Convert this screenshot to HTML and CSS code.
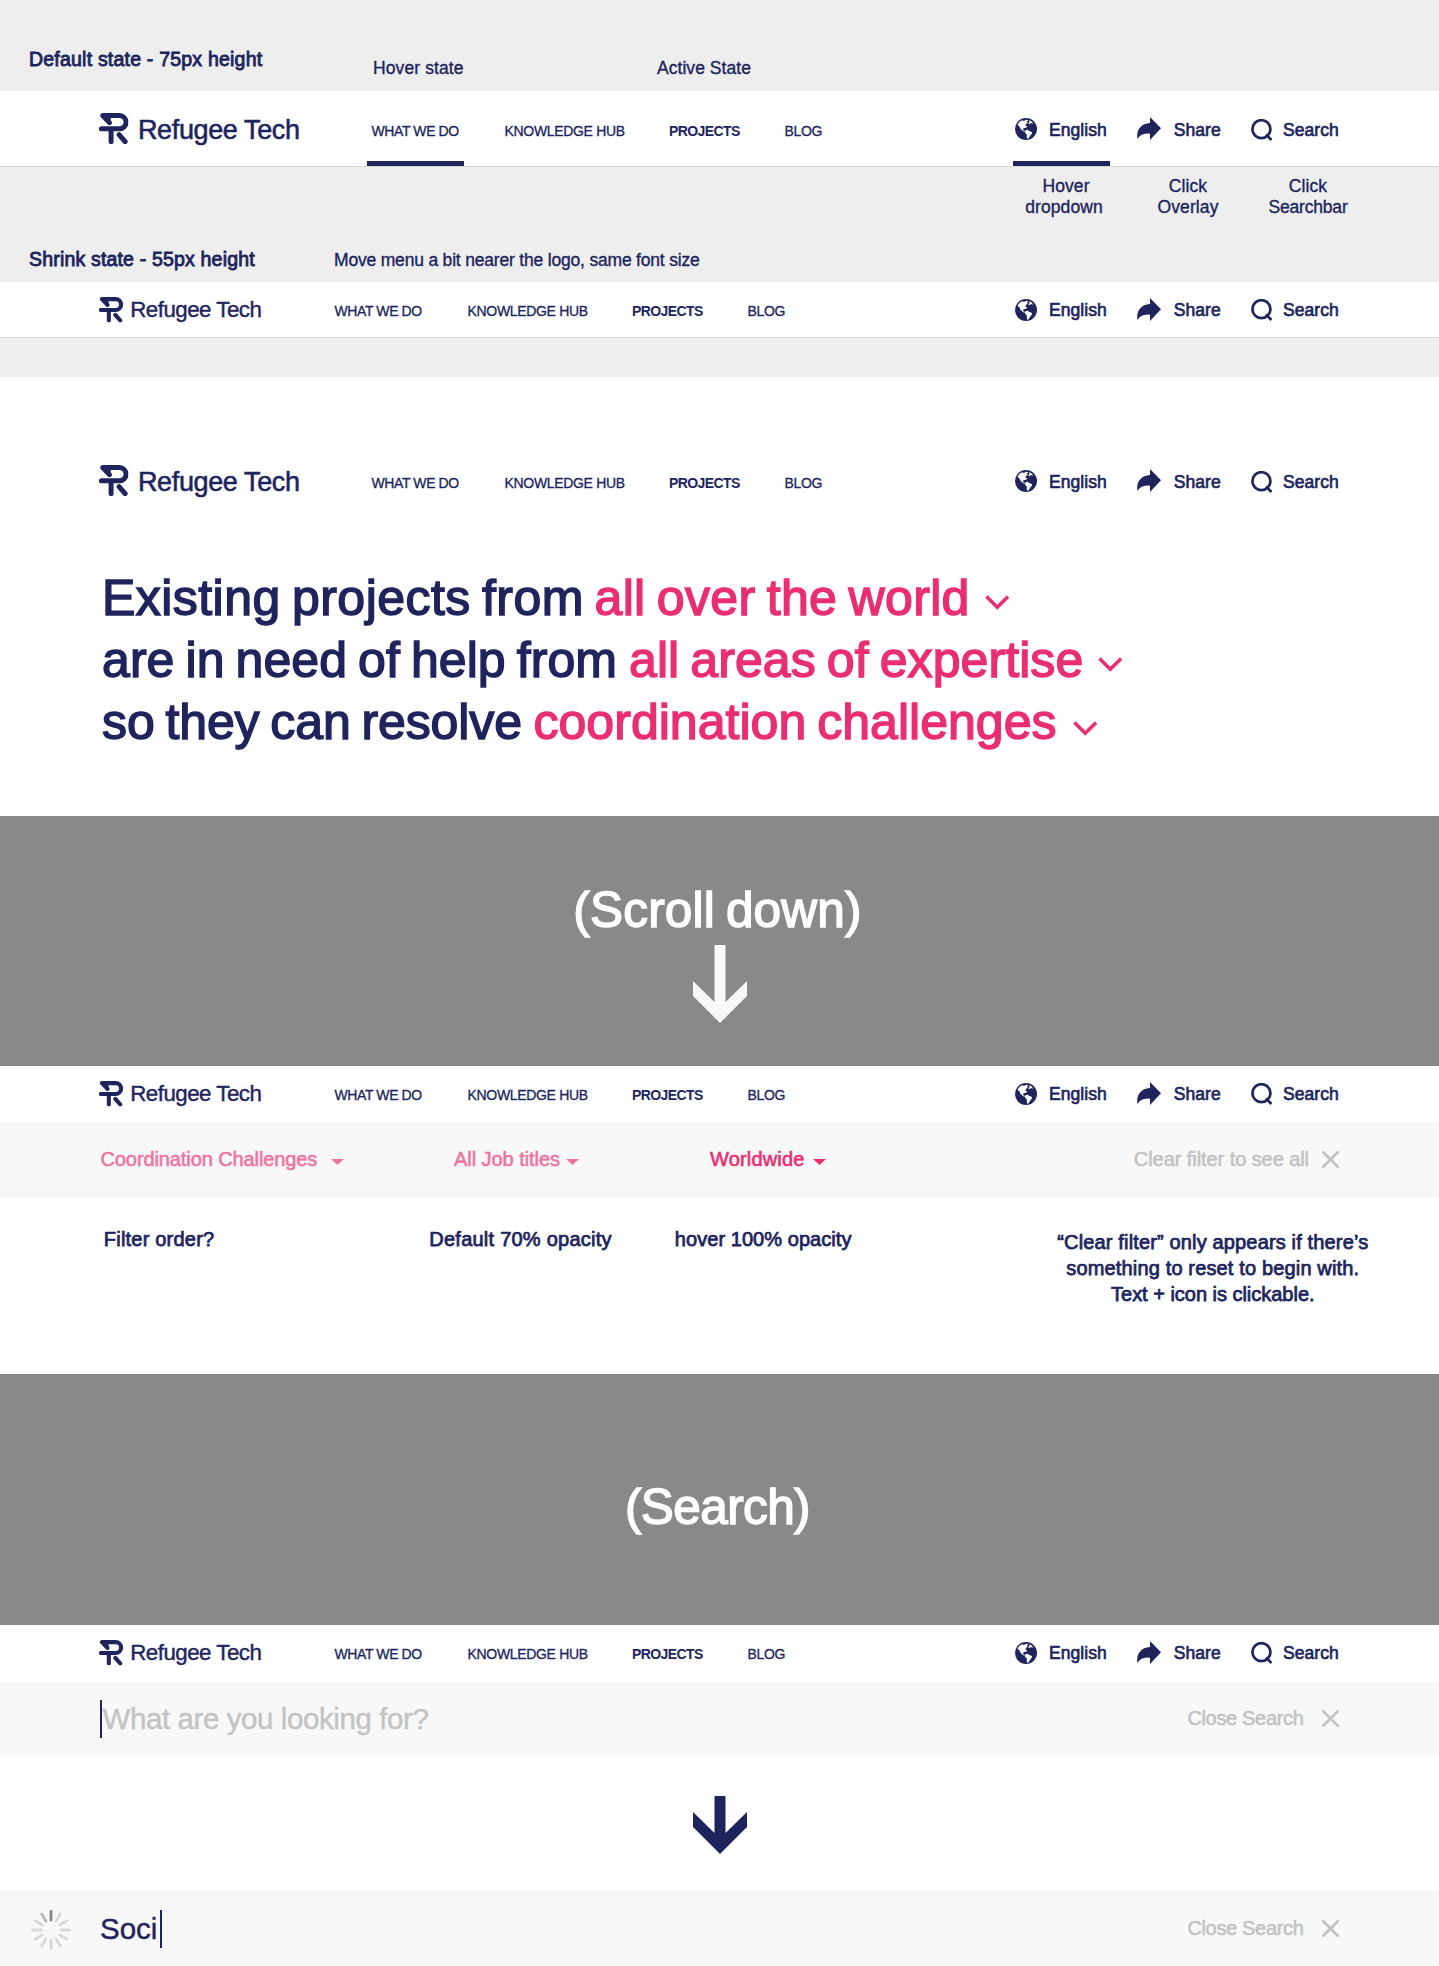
FILE: index.html
```html
<!DOCTYPE html>
<html lang="en">
<head>
<meta charset="utf-8">
<title>Refugee Tech – navigation states</title>
<link rel="stylesheet" href="styles.css">
</head>
<body>
<svg class="defs" aria-hidden="true">
  <symbol id="mark" viewBox="0 0 88 93">
    <g fill="none" stroke="currentColor" stroke-width="15" stroke-linecap="round" stroke-linejoin="round">
      <path d="M31 29 11 7.500H61a20 20 0 0 1 0 40H7M36 48V86M60 65 78 86"/>
    </g>
    <path fill="currentColor" d="M11 7h24v24l-8-2z"/>
  </symbol>
  <symbol id="globe" viewBox="0 0 66 66">
    <circle cx="33" cy="33" r="33" fill="currentColor"/>
    <g fill="#fff">
      <path d="M8 20C11 13 16 9 22 7l5 2 6-4 7 2-5 4 4 2-6 5-2 5 5 1-2 5-6 1-4 3 1 4 5 2-2 2-7-4-6-7-2-6-5-2z"/>
      <path d="M31 37l7-2 5 4 8 3-1 6-5 5-3 6-5 4-2-8 1-5-6-6z"/>
      <path d="M43 7l6 3 5 6-3 1-4-3-3 5-4-2 3-4z"/>
    </g>
  </symbol>
  <symbol id="share" viewBox="0 0 72 69">
    <path fill="currentColor" d="M39 0 72 34 39 69V50C21 47 8 54 1 66-2 40 10 20 39 18z"/>
  </symbol>
  <symbol id="search" viewBox="0 0 64 66">
    <g fill="none" stroke="currentColor" stroke-width="8"><circle cx="31" cy="30.500" r="27"/><path d="M45 46 61 63"/></g>
  </symbol>
  <symbol id="chevron" viewBox="0 0 24 15"><path fill="none" stroke="currentColor" stroke-width="3.600" d="M1.200 1.500 12 12.200 22.800 1.500"/></symbol>
  <symbol id="caret" viewBox="0 0 13 6"><path fill="currentColor" d="M0 0H13L6.500 6z"/></symbol>
  <symbol id="close" viewBox="0 0 17 17"><path fill="none" stroke="currentColor" stroke-width="2.700" stroke-linecap="round" d="M1.200 1.200 15.800 15.800M15.800 1.200 1.200 15.800"/></symbol>
</svg>

<section class="states">
  <div class="captions">
    <h2 class="title t-default">Default state - 75px height</h2>
    <p class="note n-hover">Hover state</p>
    <p class="note n-active">Active State</p>
  </div>
  <header class="bar bar-line">
    <a class="logo"><svg><use href="#mark"/></svg><span>Refugee Tech</span></a>
    <nav class="menu"><a class="m-what underlined">WHAT WE DO</a><a class="m-hub">KNOWLEDGE HUB</a><a class="m-projects">PROJECTS</a><a class="m-blog">BLOG</a></nav>
    <div class="tools">
      <a class="tool-english underlined"><svg class="i-globe"><use href="#globe"/></svg><span>English</span></a>
      <a><svg class="i-share"><use href="#share"/></svg><span>Share</span></a>
      <a><svg class="i-search"><use href="#search"/></svg><span>Search</span></a>
    </div>
  </header>
  <div class="hints">
    <p class="note"><span class="hint-first">Hover</span><br>dropdown</p>
    <p class="note">Click<br>Overlay</p>
    <p class="note">Click<br><span class="tight">Searchbar</span></p>
  </div>
  <div class="captions-small">
    <h2 class="title t-shrink">Shrink state - 55px height</h2>
    <p class="note n-move">Move menu a bit nearer the logo, same font size</p>
  </div>
  <header class="bar small bar-line">
    <a class="logo"><svg><use href="#mark"/></svg><span>Refugee Tech</span></a>
    <nav class="menu"><a class="m-what">WHAT WE DO</a><a class="m-hub">KNOWLEDGE HUB</a><a class="m-projects">PROJECTS</a><a class="m-blog">BLOG</a></nav>
    <div class="tools">
      <a><svg class="i-globe"><use href="#globe"/></svg><span>English</span></a>
      <a><svg class="i-share"><use href="#share"/></svg><span>Share</span></a>
      <a><svg class="i-search"><use href="#search"/></svg><span>Search</span></a>
    </div>
  </header>
</section>

<section class="hero">
  <header class="bar">
    <a class="logo"><svg><use href="#mark"/></svg><span>Refugee Tech</span></a>
    <nav class="menu"><a class="m-what">WHAT WE DO</a><a class="m-hub">KNOWLEDGE HUB</a><a class="m-projects">PROJECTS</a><a class="m-blog">BLOG</a></nav>
    <div class="tools">
      <a><svg class="i-globe"><use href="#globe"/></svg><span>English</span></a>
      <a><svg class="i-share"><use href="#share"/></svg><span>Share</span></a>
      <a><svg class="i-search"><use href="#search"/></svg><span>Search</span></a>
    </div>
  </header>
  <h1 class="sentence">
    <span class="line line-1"><span class="lead">Existing projects from</span><a class="pick">all over the world</a><svg><use href="#chevron"/></svg></span>
    <span class="line line-2"><span class="lead">are in need of help from</span><a class="pick">all areas of expertise</a><svg><use href="#chevron"/></svg></span>
    <span class="line line-3"><span class="lead">so they can resolve</span><a class="pick">coordination challenges</a><svg><use href="#chevron"/></svg></span>
  </h1>
</section>

<section class="divider divider-scroll">
  <p>(Scroll down)</p>
  <svg class="arrow-long" viewBox="0 0 54 78"><path fill="#f8f8f8" d="M21.500 0h11v57L54 36v15L27 78 0 51V36l21.500 21z"/></svg>
</section>

<section class="filter">
  <header class="bar small">
    <a class="logo"><svg><use href="#mark"/></svg><span>Refugee Tech</span></a>
    <nav class="menu"><a class="m-what">WHAT WE DO</a><a class="m-hub">KNOWLEDGE HUB</a><a class="m-projects">PROJECTS</a><a class="m-blog">BLOG</a></nav>
    <div class="tools">
      <a><svg class="i-globe"><use href="#globe"/></svg><span>English</span></a>
      <a><svg class="i-share"><use href="#share"/></svg><span>Share</span></a>
      <a><svg class="i-search"><use href="#search"/></svg><span>Search</span></a>
    </div>
  </header>
  <div class="strip">
    <div class="filters">
      <a class="f-challenges faded">Coordination Challenges<svg><use href="#caret"/></svg></a>
      <a class="f-jobs faded">All Job titles<svg><use href="#caret"/></svg></a>
      <a class="f-place">Worldwide<svg><use href="#caret"/></svg></a>
    </div>
    <a class="dismiss dismiss-filter">Clear filter to see all<svg><use href="#close"/></svg></a>
  </div>
  <div class="remarks">
    <p class="r-order">Filter order?</p>
    <p class="r-default">Default 70% opacity</p>
    <p class="r-hover">hover 100% opacity</p>
    <p class="r-clear">“Clear filter” only appears if there’s<br>something to reset to begin with.<br><span class="tight">Text + icon is clickable.</span></p>
  </div>
</section>

<section class="divider divider-search">
  <p>(Search)</p>
</section>

<section class="finder">
  <header class="bar small">
    <a class="logo"><svg><use href="#mark"/></svg><span>Refugee Tech</span></a>
    <nav class="menu"><a class="m-what">WHAT WE DO</a><a class="m-hub">KNOWLEDGE HUB</a><a class="m-projects">PROJECTS</a><a class="m-blog">BLOG</a></nav>
    <div class="tools">
      <a><svg class="i-globe"><use href="#globe"/></svg><span>English</span></a>
      <a><svg class="i-share"><use href="#share"/></svg><span>Share</span></a>
      <a><svg class="i-search"><use href="#search"/></svg><span>Search</span></a>
    </div>
  </header>
  <div class="strip">
    <i class="cursor"></i><span class="placeholder">What are you looking for?</span>
    <a class="dismiss dismiss-search">Close Search<svg><use href="#close"/></svg></a>
  </div>
  <div class="step">
    <svg class="arrow-short" viewBox="0 0 54 58"><path fill="#20245d" d="M21.500 0h11v37L54 16v15L27 58 0 31V16l21.500 21z"/></svg>
  </div>
  <div class="strip strip-loading">
    <svg class="spinner" viewBox="-20 -20 40 40"><g stroke="#d8d8d8" stroke-width="2.800" stroke-linecap="round">
      <path stroke="#858585" d="M0-10V-18.500"/>
      <path d="M0-10V-18.500" transform="rotate(30)"/><path d="M0-10V-18.500" transform="rotate(60)"/><path d="M0-10V-18.500" transform="rotate(90)"/>
      <path d="M0-10V-18.500" transform="rotate(120)"/><path d="M0-10V-18.500" transform="rotate(150)"/><path d="M0-10V-18.500" transform="rotate(180)"/>
      <path d="M0-10V-18.500" transform="rotate(210)"/><path d="M0-10V-18.500" transform="rotate(240)"/><path d="M0-10V-18.500" transform="rotate(270)"/>
      <path d="M0-10V-18.500" transform="rotate(300)"/><path stroke="#b8b8b8" d="M0-10V-18.500" transform="rotate(330)"/>
    </g></svg>
    <span class="query">Soci</span><i class="cursor"></i>
    <a class="dismiss dismiss-search">Close Search<svg><use href="#close"/></svg></a>
  </div>
</section>
</body>
</html>
```
FILE: styles.css
```css
* { box-sizing: border-box; }
body {
  margin: 0;
  background: #fff;
  color: #20245d;
  font-family: "Liberation Sans", Arial, sans-serif;
  white-space: nowrap;
}
h1, h2, p { margin: 0; font-weight: 400; }
svg { display: block; flex: none; overflow: visible; }
.defs { display: none; }

/* Annotated bar states */
.states { height: 377px; background: #eee; }
.captions { display: grid; grid-template-columns: 344px 284px auto; height: 91px; padding-left: 29px; }
.title { font-size: 19.5px; line-height: 22px; -webkit-text-stroke: .85px; }
.t-default { margin-top: 48px; letter-spacing: .21px; }
.t-shrink { letter-spacing: .18px; }
.note { font-size: 17.5px; line-height: 22px; -webkit-text-stroke: .35px; }
.n-hover { margin-top: 57px; letter-spacing: .1px; }
.n-active { margin-top: 57px; letter-spacing: .05px; }
.n-move { padding-top: 1px; letter-spacing: -.19px; }
.hints { display: grid; grid-template-columns: 120px 120px 120px; column-gap: 2px; height: 81px; margin-left: 1004px; padding-top: 9px; text-align: center; }
.hints .note { line-height: 21px; letter-spacing: .1px; }
.hints .note:nth-child(2) { padding-left: 4px; }
.hint-first { padding-left: 4px; }
.hints .tight { letter-spacing: -.18px; }
.captions-small { display: grid; grid-template-columns: 305px auto; height: 34px; padding-left: 29px; }

/* Navigation bar */
.bar { display: flex; height: 75px; padding-left: 99px; background: #fff; }
.bar.small { height: 56px; padding-bottom: 1px; }
.bar-line { height: 76px; border-bottom: 1px solid #d9d9d9; }
.bar-line.small { height: 56px; padding-bottom: 0; }
.logo { display: flex; align-items: center; width: 272.500px; }
.logo svg { width: 29.500px; height: 31px; }
.logo span { padding: 3px 0 0 9.500px; font-size: 27px; letter-spacing: -.38px; -webkit-text-stroke: .55px; }
.small .logo { width: 235.500px; }
.small .logo svg { width: 24px; height: 25.500px; }
.small .logo span { padding: 1px 0 0 7.200px; font-size: 22.300px; letter-spacing: -.5px; -webkit-text-stroke: .4px; }
.menu { display: grid; grid-template-columns: 133px 164.500px 115.500px auto; }
.menu a { display: flex; align-items: center; justify-self: start; padding-top: 5px; font-size: 14px; -webkit-text-stroke: .3px; }
.small .menu a { padding-top: 3px; }
.m-what { letter-spacing: -.4px; }
.m-hub { letter-spacing: -.32px; }
.menu .m-projects { font-weight: 700; letter-spacing: -.6px; -webkit-text-stroke: 0; }
.m-blog { letter-spacing: -.34px; }
.menu .underlined { width: 97px; margin-left: -4.500px; padding-left: 4.500px; }
.underlined { box-shadow: inset 0 -5px #20245d; }
.tools { display: grid; grid-template-columns: 122px 114px 188px; margin-left: auto; }
.tools a { display: flex; align-items: center; justify-self: start; font-size: 17.500px; -webkit-text-stroke: .65px; letter-spacing: .05px; }
.tools span { padding-top: 3px; }
.small .tools span { padding-top: 1px; }
.tools .underlined { width: 97px; margin-left: -2px; padding-left: 2px; }
.i-globe { width: 22px; height: 22px; margin-right: 12px; }
.i-share { width: 24px; height: 23px; margin: 0 12.800px 1px 0; }
.i-search { width: 21.500px; height: 22px; margin: 2px 10.500px 0 0; }
.small .i-search { margin-top: 1px; }

/* Hero sentence */
.hero { height: 439px; padding-top: 66px; }
.sentence { margin-top: 49px; padding-left: 102px; font-size: 50px; word-spacing: -3px; -webkit-text-stroke: 1.500px; }
.line { display: flex; align-items: center; height: 62px; line-height: 62px; }
.pick, .line svg { color: #ea2e72; }
.line svg { width: 24.500px; height: 15px; margin-top: 9px; }
.line-1 .lead { width: 492.500px; letter-spacing: .45px; }
.line-1 .pick { width: 390.500px; letter-spacing: .35px; }
.line-2 .lead { width: 527px; letter-spacing: .08px; }
.line-2 .pick { width: 468.500px; letter-spacing: .09px; }
.line-3 .lead { width: 431.500px; letter-spacing: -.1px; }
.line-3 .pick { width: 539.500px; letter-spacing: .03px; }
.line-3 svg { margin-top: 12px; }

/* Grey dividers */
.divider { display: flex; flex-direction: column; align-items: center; background: #8a8888; color: #fff; font-size: 49.500px; line-height: 62px; -webkit-text-stroke: 1.500px; }
.divider p { padding-right: 4px; }
.divider-scroll { height: 250px; padding-top: 63px; word-spacing: -3px; letter-spacing: .2px; }
.divider-search { height: 251px; padding-top: 102px; letter-spacing: -.6px; }
.arrow-long { width: 54px; height: 78px; margin-top: 4px; }

/* Filter and search strips */
.strip { display: flex; align-items: center; height: 75px; padding: 0 100px; background: #f8f8f8; font-size: 20px; -webkit-text-stroke: .6px; }
.filters { display: grid; grid-template-columns: 353.500px 256px auto; margin-left: .5px; color: #ea2e72; }
.filters a { display: flex; align-items: center; }
.filters svg { width: 13px; height: 6px; margin: 5px 0 0; }
.faded { opacity: .65; }
.f-challenges { letter-spacing: -.1px; }
.f-challenges svg { margin-left: 14px; }
.f-jobs { letter-spacing: -.05px; }
.f-jobs svg { margin-left: 6px; }
.f-place { letter-spacing: .17px; }
.f-place svg { margin-left: 8px; }
.dismiss { display: flex; align-items: center; margin-left: auto; color: #c3c3c3; }
.dismiss svg { width: 17px; height: 17px; }
.dismiss-filter { letter-spacing: -.07px; }
.dismiss-filter svg { margin-left: 13px; }
.dismiss-search { letter-spacing: -.33px; }
.dismiss-search svg { margin-left: 18.500px; }
.remarks { display: grid; grid-template-columns: 325.500px 245.500px 368px 340px; height: 177px; padding: 29px 0 0 103.800px; font-size: 20px; line-height: 26px; -webkit-text-stroke: .75px; }
.r-order { letter-spacing: .21px; }
.r-default { letter-spacing: .24px; }
.r-hover { letter-spacing: .06px; }
.r-clear { padding-top: 2.500px; text-align: center; letter-spacing: .15px; }
.r-clear .tight { letter-spacing: -.02px; }

.cursor { width: 2px; height: 38px; background: #20245d; }
.placeholder, .query { font-size: 29.500px; -webkit-text-stroke: .4px; }
.placeholder { padding-left: .5px; color: #c3c3c3; letter-spacing: -.41px; }
.query { width: 60px; letter-spacing: -.05px; }
.step { display: flex; justify-content: center; height: 135px; padding-top: 40px; }
.arrow-short { width: 54px; height: 58px; }
.strip-loading { padding-left: 31px; }
.spinner { width: 40px; height: 40px; margin: 3px 29px 0 0; }
```
